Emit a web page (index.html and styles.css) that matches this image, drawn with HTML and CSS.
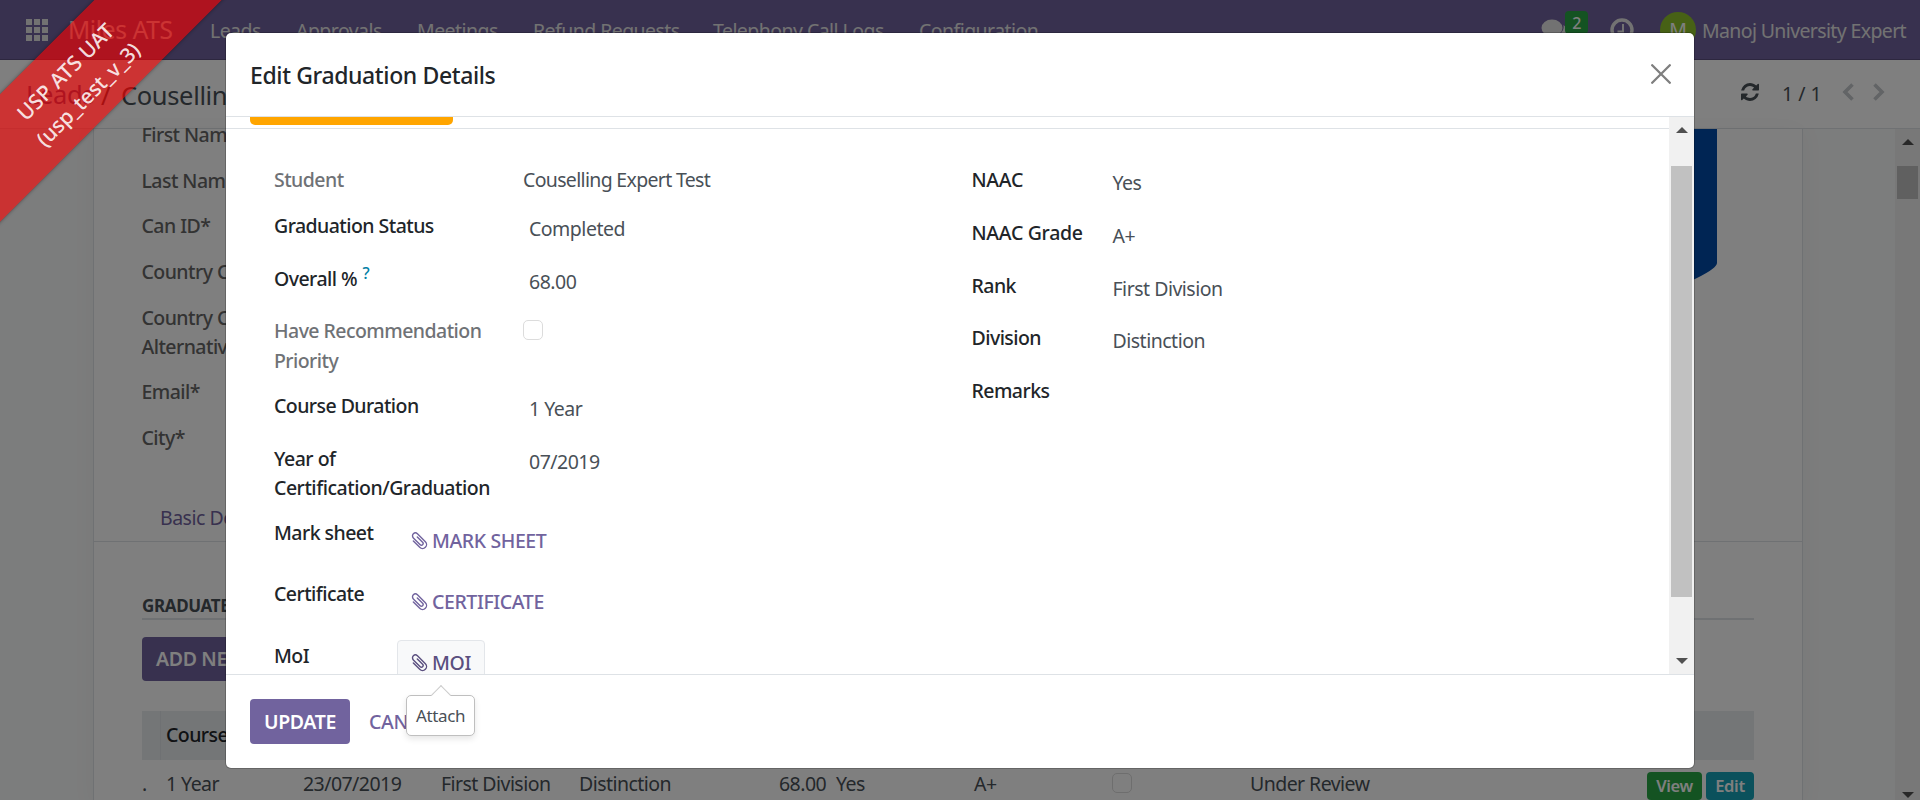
FILE: index.html
```html
<!DOCTYPE html>
<html lang="en">
<head>
<meta charset="utf-8">
<title>Miles ATS</title>
<link rel="stylesheet" href="styles.css">
</head>
<body>
<svg class="defs" width="0" height="0">
  <symbol id="clip" viewBox="0 0 18 18"><path transform="rotate(-45 9 9)" d="M10.600 5v7.500a1.700 1.700 0 0 1-3.400 0V2.800a2.900 2.900 0 0 1 5.800 0V14a4 4 0 0 1-8 0V5" fill="none" stroke="currentColor" stroke-width="1.400" stroke-linecap="round"/></symbol>
</svg>
<div class="app">
  <header class="navbar">
    <svg class="apps" viewBox="0 0 22 22"><path d="M0 0h6v6H0zM8 0h6v6H8zM16 0h6v6h-6zM0 8h6v6H0zM8 8h6v6H8zM16 8h6v6h-6zM0 16h6v6H0zM8 16h6v6H8zM16 16h6v6h-6z" fill="currentColor"/></svg>
    <span class="brand">Miles ATS</span>
    <nav class="menu"><span>Leads</span><span>Approvals</span><span>Meetings</span><span>Refund Requests</span><span>Telephony Call Logs</span><span>Configuration</span></nav>
    <div class="systray">
      <svg class="chat" viewBox="0 0 28 22"><ellipse cx="11" cy="9" rx="10.500" ry="8.500" fill="currentColor"/><path d="M4 15l-2 6 7-4zM22.500 6c5 4 4 9 0 11l3 4-8-3c-2 0-4 0-5-1 7-1 11-5 10-11z" fill="currentColor"/></svg>
      <span class="badge">2</span>
      <svg class="clock" viewBox="0 0 24 24"><circle cx="12" cy="12" r="10" fill="none" stroke="currentColor" stroke-width="3.400"/><path d="M13 6v7.500H7.500" fill="none" stroke="currentColor" stroke-width="2"/></svg>
      <span class="avatar">M</span>
      <span class="user">Manoj University Expert</span>
    </div>
  </header>
  <div class="control">
    <div class="crumbs"><span class="crumb-link">Leads</span><span class="sep">/</span><span>Couselling Expert Test</span></div>
    <div class="pager">
      <svg class="refresh" viewBox="0 0 1536 1536"><path fill="currentColor" d="M1511 928q0 5-1 7-64 268-268 434.500t-478 166.500q-146 0-282.500-55t-243.500-157l-129 129q-19 19-45 19t-45-19-19-45v-448q0-26 19-45t45-19h448q26 0 45 19t19 45-19 45l-137 137q71 66 161 102t187 36q134 0 250-65t186-179q11-17 53-117 8-23 30-23h192q13 0 22.500 9.500t9.500 22.500zm25-800v448q0 26-19 45t-45 19h-448q-26 0-45-19t-19-45 19-45l138-138q-148-137-349-137-134 0-250 65t-186 179q-11 17-53 117-8 23-30 23h-199q-13 0-22.500-9.500t-9.500-22.500v-7q65-268 270-434.500t480-166.500q146 0 284 55.500t245 156.500l130-129q19-19 45-19t45 19 19 45z"/></svg>
      <span class="count">1 / 1</span>
      <svg class="chev" viewBox="0 0 12 18"><path d="M10.500 1.500 3 9l7.500 7.500" fill="none" stroke="currentColor" stroke-width="3.600"/></svg>
      <svg class="chev" viewBox="0 0 12 18"><path d="M1.500 1.500 9 9l-7.500 7.500" fill="none" stroke="currentColor" stroke-width="3.600"/></svg>
    </div>
  </div>
  <div class="content">
    <main class="sheet">
      <svg class="shield" viewBox="0 0 60 160"><path d="M0 0h60v134q0 5-20 15-20 11-40 11z" fill="#004aa8"/></svg>
      <div class="labels"><span>First Name*</span><span>Last Name*</span><span>Can ID*</span><span>Country Code*</span><span class="two">Country Code<br>Alternative</span><span>Email*</span><span>City*</span></div>
      <div class="tabs">Basic Details</div>
      <div class="section">
        <h3 class="section-title">GRADUATE DETAILS</h3>
        <div><span class="btn add">ADD NEW</span></div>
        <div class="thead"><span></span><span class="th">Course Duration</span></div>
        <div class="trow"><span>.</span><span>1 Year</span><span>23/07/2019</span><span>First Division</span><span>Distinction</span><span>68.00</span><span>Yes</span><span>A+</span><span><i class="check"></i></span><span>Under Review</span><span class="tag view">View</span><span class="tag edit">Edit</span></div>
      </div>
    </main>
    <div class="scroll outer"><i class="up"></i><i class="thumb"></i><i class="down"></i></div>
  </div>
</div>
<div class="backdrop">
  <section class="modal">
    <header class="modal-head"><h1>Edit Graduation Details</h1>
      <svg class="close" viewBox="0 0 20 20"><path d="M1.200 1.200l17.600 17.600M18.800 1.200 1.200 18.800" stroke="currentColor" stroke-width="2.300" stroke-linecap="round"/></svg>
    </header>
    <div class="modal-body">
      <div class="pane">
        <div class="strip"><div class="stage"></div></div>
        <div class="form">
          <div class="col left">
            <div class="row r46"><label class="muted">Student</label><b class="plain">Couselling Expert Test</b></div>
            <div class="row r53"><label>Graduation Status</label><b>Completed</b></div>
            <div class="row r52"><label>Overall % <sup>?</sup></label><b>68.00</b></div>
            <div class="row r75"><label class="muted">Have Recommendation<br>Priority</label><i class="check"></i></div>
            <div class="row r53"><label>Course Duration</label><b>1 Year</b></div>
            <div class="row r74"><label class="tight">Year of<br>Certification/Graduation</label><b>07/2019</b></div>
            <div class="row file r61"><label>Mark sheet</label><span class="attach"><svg><use href="#clip"/></svg>MARK SHEET</span></div>
            <div class="row file r61"><label>Certificate</label><span class="attach"><svg><use href="#clip"/></svg>CERTIFICATE</span></div>
            <div class="row file r61"><label class="low">MoI</label><span class="attach active"><svg><use href="#clip"/></svg>MOI</span></div>
          </div>
          <div class="col right">
            <div class="row r53"><label class="caps">NAAC</label><b>Yes</b></div>
            <div class="row r53"><label class="caps">NAAC Grade</label><b>A+</b></div>
            <div class="row r52"><label>Rank</label><b>First Division</b></div>
            <div class="row r53"><label>Division</label><b>Distinction</b></div>
            <div class="row r53"><label>Remarks</label></div>
          </div>
        </div>
      </div>
      <div class="scroll inner"><i class="up"></i><i class="thumb"></i><i class="down"></i></div>
    </div>
    <footer class="modal-foot"><span class="btn update">UPDATE</span><span class="btn cancel">CANCEL</span></footer>
  </section>
</div>
<div class="tooltip">Attach</div>
<div class="ribbon">USP ATS UAT<br><span class="db">(usp_test_v_3)</span></div>
</body>
</html>
```
FILE: styles.css
```css
* { box-sizing: border-box; }
body { margin: 0; width: 1920px; height: 800px; overflow: hidden; position: relative; font: 19.5px/30px "Noto Sans", "Open Sans", sans-serif; letter-spacing: -0.55px; color: #495057; }
h1, h3 { margin: 0; }
i { font-style: normal; }
svg { display: block; flex: none; }
.defs { position: absolute; }
.app { height: 800px; display: flex; flex-direction: column; background: #fff; overflow: hidden; isolation: isolate; }

.navbar { height: 60px; flex: none; display: flex; align-items: center; padding: 0 14px 0 26px; background: #71639e; border-bottom: 1px solid #5a4f7f; color: #e5e5e5; }
.apps { width: 22px; height: 22px; color: #e5e5e5; }
.brand { width: 142px; margin-left: 20px; font-size: 24.5px; letter-spacing: -0.35px; color: #fff; }
.menu { display: grid; grid-template-columns: 86px 121px 116px 180px 206px auto; padding-top: 3px; white-space: nowrap; }
.systray { margin-left: auto; display: flex; align-items: center; }
.chat { width: 28px; height: 22px; }
.badge { width: 23px; height: 23px; margin: -14px 22px 0 -4px; border-radius: 4px; background: #28a745; color: #fff; font-size: 16px; font-weight: 500; line-height: 24px; text-align: center; z-index: 1; }
.clock { width: 24px; height: 24px; margin-right: 26px; }
.avatar { width: 36px; height: 36px; border-radius: 50%; background: #8fc32b; color: #fff; line-height: 36px; text-align: center; margin-right: 6px; }
.user { padding-top: 3px; letter-spacing: -0.63px; white-space: nowrap; }

.control { height: 69px; flex: none; display: flex; justify-content: space-between; padding: 0 35px 0 26px; border-bottom: 1px solid #dee2e6; }
.crumbs { display: flex; font-size: 25.5px; padding-top: 20px; letter-spacing: -0.35px; }
.crumb-link { width: 75px; color: #71639e; margin-top: -1px; }
.sep { width: 20px; }
.pager { display: flex; align-items: center; height: 64px; }
.refresh { width: 18px; height: 18px; color: #495057; margin-right: 23px; }
.count { width: 60px; padding-top: 4px; letter-spacing: 0; }
.chev { width: 12px; height: 18px; margin-right: 19px; color: #c4c8cc; }
.chev:last-child { margin-right: 0; }

.content { flex: 1; display: flex; justify-content: space-between; padding-left: 93px; background: #f9fafa; }
.sheet { width: 1710px; border: solid #dee2e6; border-width: 0 1px; background: #fff; position: relative; box-shadow: 0 0 24px rgba(0, 0, 0, .04); }
.shield { position: absolute; left: 1563px; top: 0; width: 60px; height: 160px; }
.labels { display: flex; flex-direction: column; gap: 15.700px; height: 365px; margin-top: -9px; padding-left: 47.500px; color: #666; font-weight: 500; }
.labels span { line-height: 30px; white-space: nowrap; }
.labels .two { line-height: 29px; margin-bottom: 1px; }
.tabs { height: 57px; border-bottom: 1px solid #dee2e6; padding: 18px 0 0 66px; color: #71639e; letter-spacing: -0.5px; }
.section { padding: 52px 48px 0; }
.section-title { font-size: 17px; line-height: 23px; height: 26px; border-bottom: 2px solid #dee2e6; margin-bottom: 17px; color: #495057; font-weight: 700; letter-spacing: -0.35px; }
.btn { display: inline-block; height: 45px; line-height: 45px; border-radius: 4px; font-weight: 600; letter-spacing: -0.35px; white-space: nowrap; }
.add { height: 44px; line-height: 43px; padding: 0 14px; color: #fff; background: #71639e; vertical-align: top; }
.thead { height: 49px; margin-top: 30px; display: grid; grid-template-columns: 18px 1fr; background: #e9ecef; line-height: 48px; font-weight: 500; color: #212529; }
.th { padding-left: 5px; border-left: 1px solid #dee2e6; }
.trow { display: grid; grid-template-columns: 24px 137px 138px 138px 200px 57px 138px 138px 138px 397px 59px 48px; line-height: 47px; height: 48px; white-space: nowrap; overflow: hidden; }
.check { display: block; width: 20px; height: 20px; border: 1px solid #dcdcdc; border-radius: 5px; background: #fff; }
.trow .check { margin-top: 13px; }
.tag { height: 28px; margin-top: 12px; line-height: 28px; font-size: 16.5px; font-weight: 600; letter-spacing: -0.35px; text-align: center; border-radius: 4px; color: #fff; }
.view { background: #28a745; margin-right: 4px; }
.edit { background: #17a2b8; }

.scroll { width: 25px; background: #f1f1f1; display: flex; flex-direction: column; align-items: center; }
.up, .down { width: 0; height: 0; border: 6px solid transparent; }
.up { border-top: 0; border-bottom-color: #505050; }
.down { border-bottom: 0; border-top-color: #505050; margin-top: auto; }
.thumb { width: 21px; background: #c1c1c1; }
.outer .up { margin: 10px 0 21px; }
.outer .thumb { height: 33px; }
.outer .down { margin-bottom: 10px; }
.inner .up { margin: 10px 0 33px; }
.inner .thumb { height: 431px; }
.inner .down { margin-bottom: 10px; }

.backdrop { position: absolute; inset: 0; background: rgba(0, 0, 0, .5); padding: 33px 226px; }
.modal { width: 1468px; height: 735px; display: flex; flex-direction: column; background: #fff; border-radius: 5px; box-shadow: 0 0 0 1px rgba(0, 0, 0, .2); }
.modal-head { height: 84px; flex: none; display: flex; justify-content: space-between; padding: 27px 23px 0 24px; border-bottom: 1px solid #dee2e6; }
.modal-head h1 { font-size: 23px; font-weight: 500; color: #212529; line-height: 30px; letter-spacing: -0.38px; }
.close { width: 20px; height: 20px; margin-top: 4px; color: #7f7f7f; }
.modal-body { height: 557px; flex: none; display: flex; overflow: hidden; }
.pane { flex: 1; overflow: hidden; }
.strip { height: 12px; padding-left: 24px; border-bottom: 1px solid #dee2e6; }
.stage { width: 203px; height: 8px; background: orange; border-radius: 0 0 5px 5px; }
.form { display: flex; padding: 36px 0 0 48px; }
.col { width: 698px; }
.row { display: grid; grid-template-columns: 249px 1fr; white-space: nowrap; }
.right .row { grid-template-columns: 141px 1fr; }
.left .file { grid-template-columns: 123px 1fr; }
.row b { font-weight: 400; padding: 3px 0 0 6px; letter-spacing: -0.5px; }
.row .plain { padding: 0; letter-spacing: -0.67px; }
.right .row b { padding-left: 0; }
.row label { color: #212529; font-weight: 500; }
.row .caps { letter-spacing: -0.3px; }
.row .muted { color: #6f7276; }
.row .tight { line-height: 29px; letter-spacing: -0.48px; }
.row .low { padding-top: 1px; }
.row .check { margin-top: 4px; }
.r46 { height: 46px; }
.r52 { height: 52px; }
.r53 { height: 53px; }
.r74 { height: 74px; }
.r75 { height: 75px; }
.r61 { height: 61px; }
sup { font-size: 16px; line-height: 0; vertical-align: 7px; margin-left: 1px; color: #0180a5; }
.attach { display: flex; align-items: center; justify-self: start; height: 46px; padding: 0 13px 0 12px; border: 1px solid transparent; border-radius: 4px; color: #71639e; font-weight: 500; letter-spacing: -0.4px; }
.attach svg { width: 18px; height: 18px; margin-right: 4px; }
.active { background: #f8f9fa; border-color: #e3e6ea; color: #5a4f7f; }
.modal-foot { flex: 1; border-top: 1px solid #dee2e6; padding: 24px; display: flex; gap: 6px; }
.update { width: 100px; text-align: center; background: #71639e; color: #fff; }
.cancel { padding: 0 13px; color: #71639e; font-weight: 500; }

.tooltip { position: absolute; left: 406px; top: 695px; width: 69px; height: 41px; border: 1px solid #bfbfbf; border-radius: 5px; background: #fff; box-shadow: 0 3px 6px rgba(0, 0, 0, .1); font-size: 17px; line-height: 40px; letter-spacing: -0.35px; text-align: center; }
.tooltip::before { content: ""; position: absolute; left: 27px; top: -8px; width: 13px; height: 13px; background: #fff; border: solid #ccc; border-width: 1px 0 0 1px; transform: rotate(45deg); }
.ribbon { position: absolute; left: -126px; top: 34px; width: 410px; height: 90px; padding: 14px 9px 0 0; transform: rotate(-45deg); background: rgba(255, 0, 0, .6); box-shadow: 0 0 4px rgba(0, 0, 0, .4); color: rgba(255, 255, 255, .87); font-size: 21px; line-height: 32px; font-weight: 500; letter-spacing: .1px; text-align: center; }
.db { letter-spacing: -0.15px; }
```
